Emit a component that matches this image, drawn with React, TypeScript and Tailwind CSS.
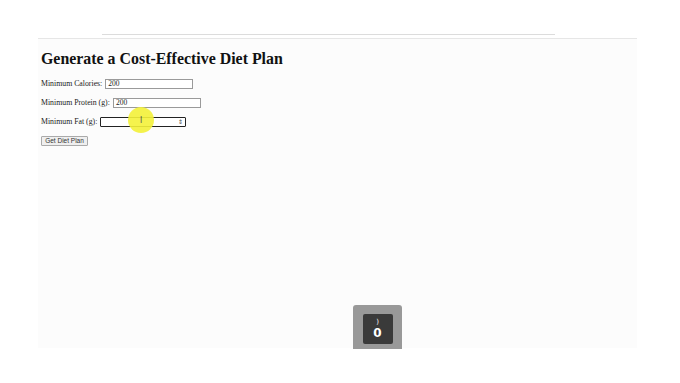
import React from "react";

export default function App() {
  const serif = { fontFamily: '"Liberation Serif", "Times New Roman", serif' };
  return (
    <div className="relative w-[680px] h-[383px] bg-white overflow-hidden">
      <div className="h-[34px]" />
      <div className="ml-[102px] w-[453px] h-[1px] bg-[#dcdcdc]" />
      <div className="h-[3px]" />
      <div
        className="relative ml-[38px] w-[599px] h-[310px] bg-[#fcfcfc] border-t border-[#e6e6e6] pl-[3px] pt-[11px]"
        style={serif}
      >
        <h1 className="text-[15.9px] font-bold leading-[18px] text-[#111]">
          Generate a Cost-Effective Diet Plan
        </h1>
        <div className="mt-[10px] flex flex-col gap-[8px] text-[7.8px] text-[#222]">
          <div className="flex items-center h-[11px]">
            <span>Minimum Calories:</span>
            <div className="ml-[3px] w-[88px] h-[10px] border border-[#9a9a9a] bg-white flex items-center px-[2px] text-[7.5px]">
              200
            </div>
          </div>
          <div className="flex items-center h-[11px]">
            <span>Minimum Protein (g):</span>
            <div className="ml-[3px] w-[88px] h-[10px] border border-[#9a9a9a] bg-white flex items-center px-[2px] text-[7.5px]">
              200
            </div>
          </div>
          <div className="flex items-center h-[11px]">
            <span>Minimum Fat (g):</span>
            <div className="ml-[3px] w-[86px] h-[10px] border-[1.5px] border-[#222] rounded-[1px] bg-white flex items-center justify-end pr-[2px]">
              <span className="text-[6px] leading-none text-[#444]">⇕</span>
            </div>
          </div>
          <div className="flex items-center h-[11px]">
            <div
              className="w-[47px] h-[10px] border border-[#aaa] rounded-[1px] bg-[#efefef] flex items-center justify-center text-[6.5px] text-[#333]"
              style={{ fontFamily: '"Liberation Sans", Arial, sans-serif' }}
            >
              Get Diet Plan
            </div>
          </div>
        </div>
        {/* cursor highlight */}
        <div className="absolute left-[90px] top-[68px] w-[26px] h-[26px] rounded-full bg-[#f4f23a] opacity-90 flex items-center justify-center">
          <span className="text-[9px] leading-none text-[#555]" style={{ fontFamily: '"DejaVu Sans", sans-serif' }}>I</span>
        </div>
        {/* bottom widget */}
        <div className="absolute left-[315px] top-[266px] w-[49px] h-[44px] bg-[#999] rounded-t-[3px] flex justify-center pt-[9px]">
          <div
            className="w-[30px] h-[30px] bg-[#3a3a3a] rounded-[2px] flex flex-col items-center justify-center text-white leading-none"
            style={{ fontFamily: '"DejaVu Sans", sans-serif' }}
          >
            <span className="text-[7px]">)</span>
            <span className="text-[12px] font-bold mt-[1px]">0</span>
          </div>
        </div>
      </div>
    </div>
  );
}
